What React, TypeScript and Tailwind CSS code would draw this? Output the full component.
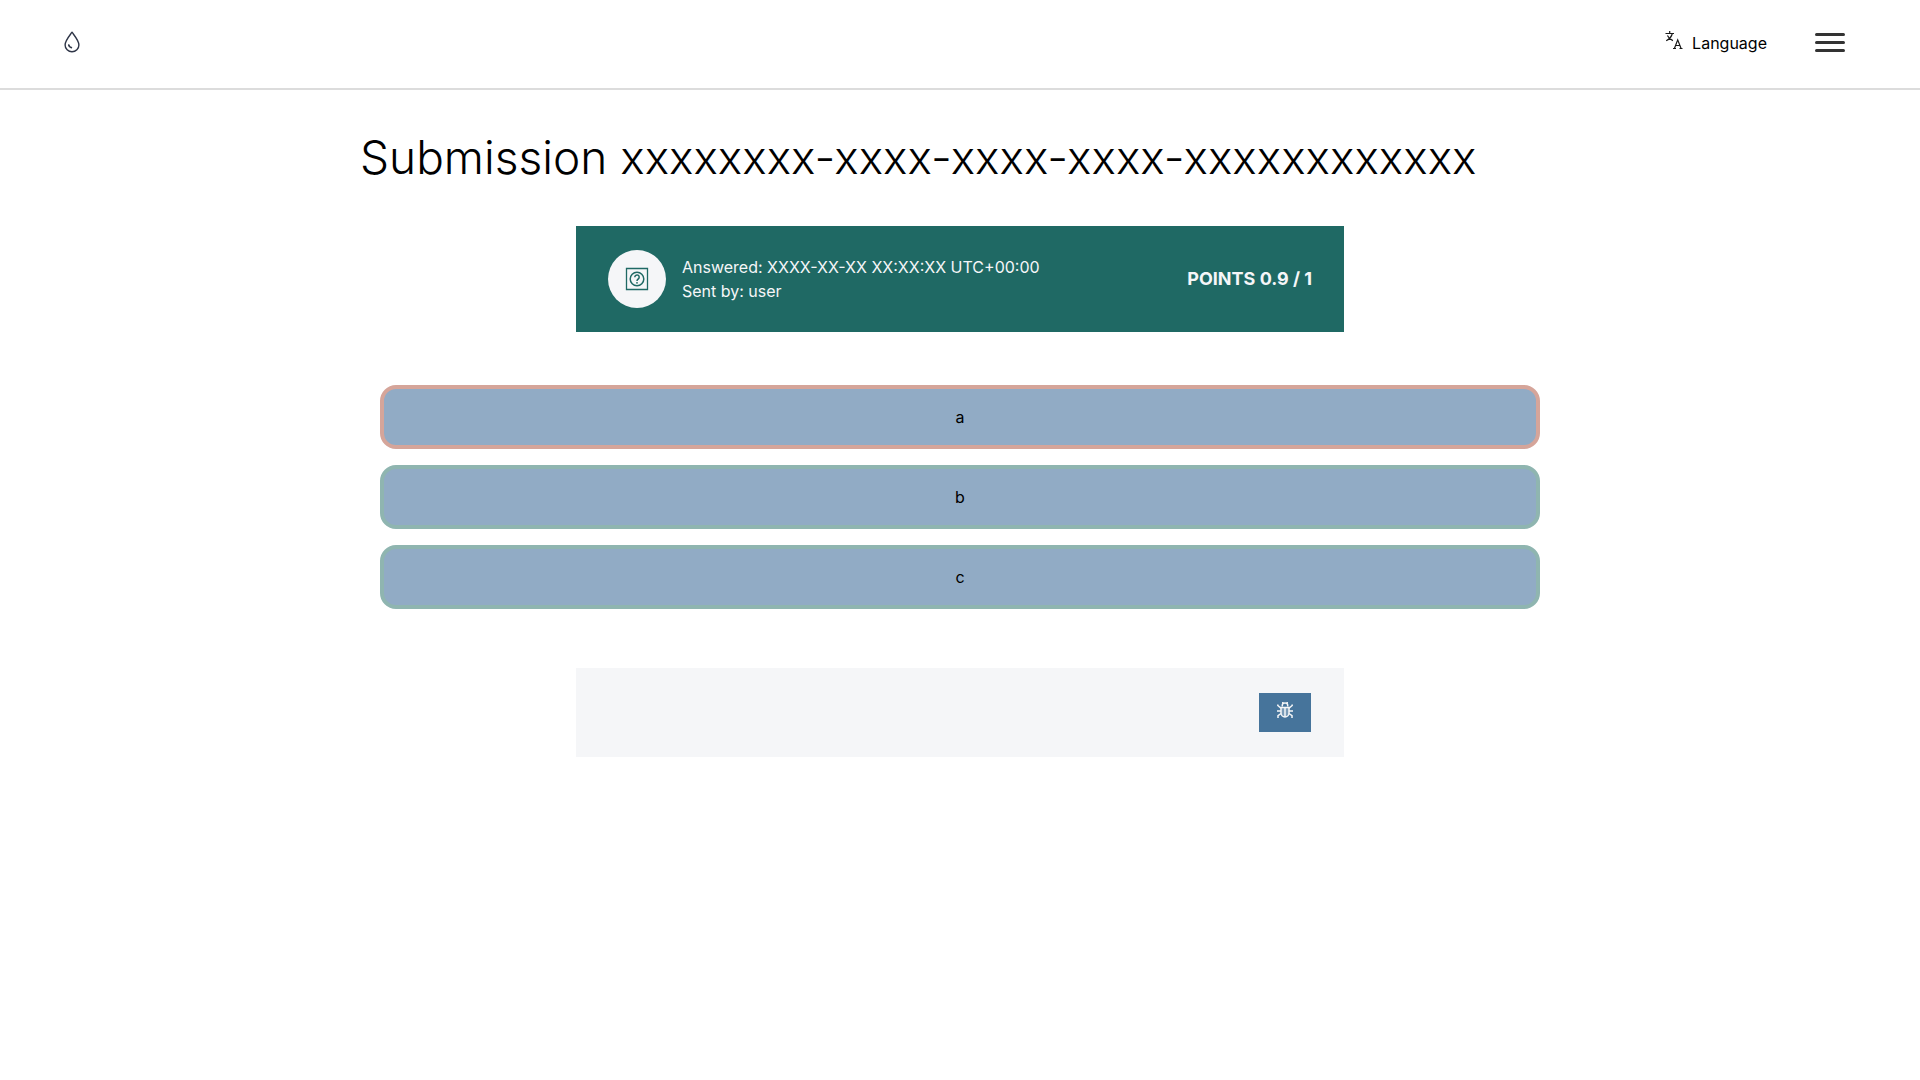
type Answer = { label: string; border: string };

const answers: Answer[] = [
  { label: "a", border: "border-[#d5a59a]" },
  { label: "b", border: "border-[#8fb5b0]" },
  { label: "c", border: "border-[#8fb5b0]" },
];

function DropIcon() {
  return (
    <svg className="h-[22px] w-4" viewBox="0 0 16 22" fill="none" stroke="#2f3648" strokeWidth="1.4" strokeLinecap="round" strokeLinejoin="round" aria-hidden="true">
      <path d="M8 1.2C5.6 4.6 1.1 9.6 1.1 13.9a6.9 6.9 0 0 0 13.8 0C14.9 9.6 10.4 4.6 8 1.2Z" />
      <path d="M4.8 14.2a3 3 0 0 0 2.5 2.4" strokeWidth="1.8" />
    </svg>
  );
}

function TranslateIcon() {
  return (
    <svg className="h-5 w-5" viewBox="0 0 20 20" fill="none" stroke="#1a1a1a" strokeWidth="1.2" aria-hidden="true">
      <path d="M1.5 2.5H10M5.7 0v2.5M8.3 2.5C7.6 5.6 5.5 8.2 2.200 9.800M3.400 4.500C4.400 6.600 6.200 8.400 8.900 9.600" />
      <path d="M9 17.500h3M15.500 17.500h3M10.400 17.500 13.700 8.800l3.400 8.700M11.600 14.500h4.300" />
    </svg>
  );
}

function QuizIcon() {
  return (
    <svg className="h-6 w-6" viewBox="0 0 24 24" fill="none" stroke="#1f6964" strokeWidth="1.3" aria-hidden="true">
      <path d="M1.5 1.5h21v21h-21z" />
      <circle cx="12" cy="12" r="6.8" strokeWidth="1.5" />
      <path d="M9.800 10.200a2.200 2.200 0 1 1 3.400 1.800c-.8.5-1.200.9-1.200 2" strokeWidth="1.5" />
      <circle cx="12" cy="15.8" r=".9" fill="#1f6964" stroke="none" />
    </svg>
  );
}

function BugIcon() {
  return (
    <svg className="h-4 w-4" viewBox="0 0 16 16" fill="none" stroke="#f5f6f7" strokeWidth="1.5" aria-hidden="true">
      <path d="M5.300 4.500V3.200A2.700 2.200 0 0 1 10.700 3.200V4.500M5.800 0v1.300M10.200 0v1.300" />
      <path d="M4 5.500h8V11a4 4 0 0 1-8 0Z" fill="#f5f6f7" fillOpacity="0.3" />
      <path d="M8 5.500V15" />
      <path d="M.8 2.500v1L4 6.300M15.200 2.500v1L12 6.300M0 9h4M12 9h4M4 11.500 1 13.600V16M12 11.500l3 2.100V16" />
    </svg>
  );
}

export default function App() {
  return (
    <div className="min-h-screen bg-white font-['Inter',sans-serif] text-base text-black">
      <header className="flex h-[90px] items-center justify-between border-b-2 border-[#dcdcdc] px-16 pb-1">
        <a href="#" aria-label="Home">
          <DropIcon />
        </a>
        <div className="flex items-center gap-12 pr-[11px]">
          <button type="button" className="flex gap-2 pt-0.5">
            <TranslateIcon />
            <span>Language</span>
          </button>
          <button type="button" aria-label="Open menu" className="flex w-[30px] flex-col gap-[5px]">
            <span className="h-[3px] w-full rounded-sm bg-[#333]" />
            <span className="h-[3px] w-full rounded-sm bg-[#333]" />
            <span className="h-[3px] w-full rounded-sm bg-[#333]" />
          </button>
        </div>
      </header>
      <main className="mx-auto max-w-[1200px] pt-[31px]">
        <h1 className="text-[46px] leading-[72px] font-light">
          Submission xxxxxxxx-xxxx-xxxx-xxxx-xxxxxxxxxxxx
        </h1>
        <section className="mx-auto mt-[33px] flex max-w-3xl items-center bg-[#1f6964] px-8 py-6 text-[#f5f6f8]">
          <div className="flex h-[58px] w-[58px] items-center justify-center rounded-full bg-[#f5f6f8]">
            <QuizIcon />
          </div>
          <div className="ml-4 grow">
            <p>Answered: XXXX-XX-XX XX:XX:XX UTC+00:00</p>
            <p>Sent by: user</p>
          </div>
          <p className="text-lg font-bold">POINTS 0.9 / 1</p>
        </section>
        <div className="mt-[53px] flex flex-col gap-4 px-5">
          {answers.map((answer) => (
            <button
              key={answer.label}
              type="button"
              className={`h-16 w-full rounded-2xl border-4 bg-[#91abc5] ${answer.border}`}
            >
              {answer.label}
            </button>
          ))}
        </div>
        <section className="mx-auto mt-[59px] flex max-w-3xl justify-end bg-[#f5f6f8] px-[33px] py-[25px]">
          <button type="button" aria-label="Report a problem" className="flex h-[39px] w-[52px] items-center justify-center bg-[#46749b] pb-[5px]">
            <BugIcon />
          </button>
        </section>
      </main>
    </div>
  );
}
